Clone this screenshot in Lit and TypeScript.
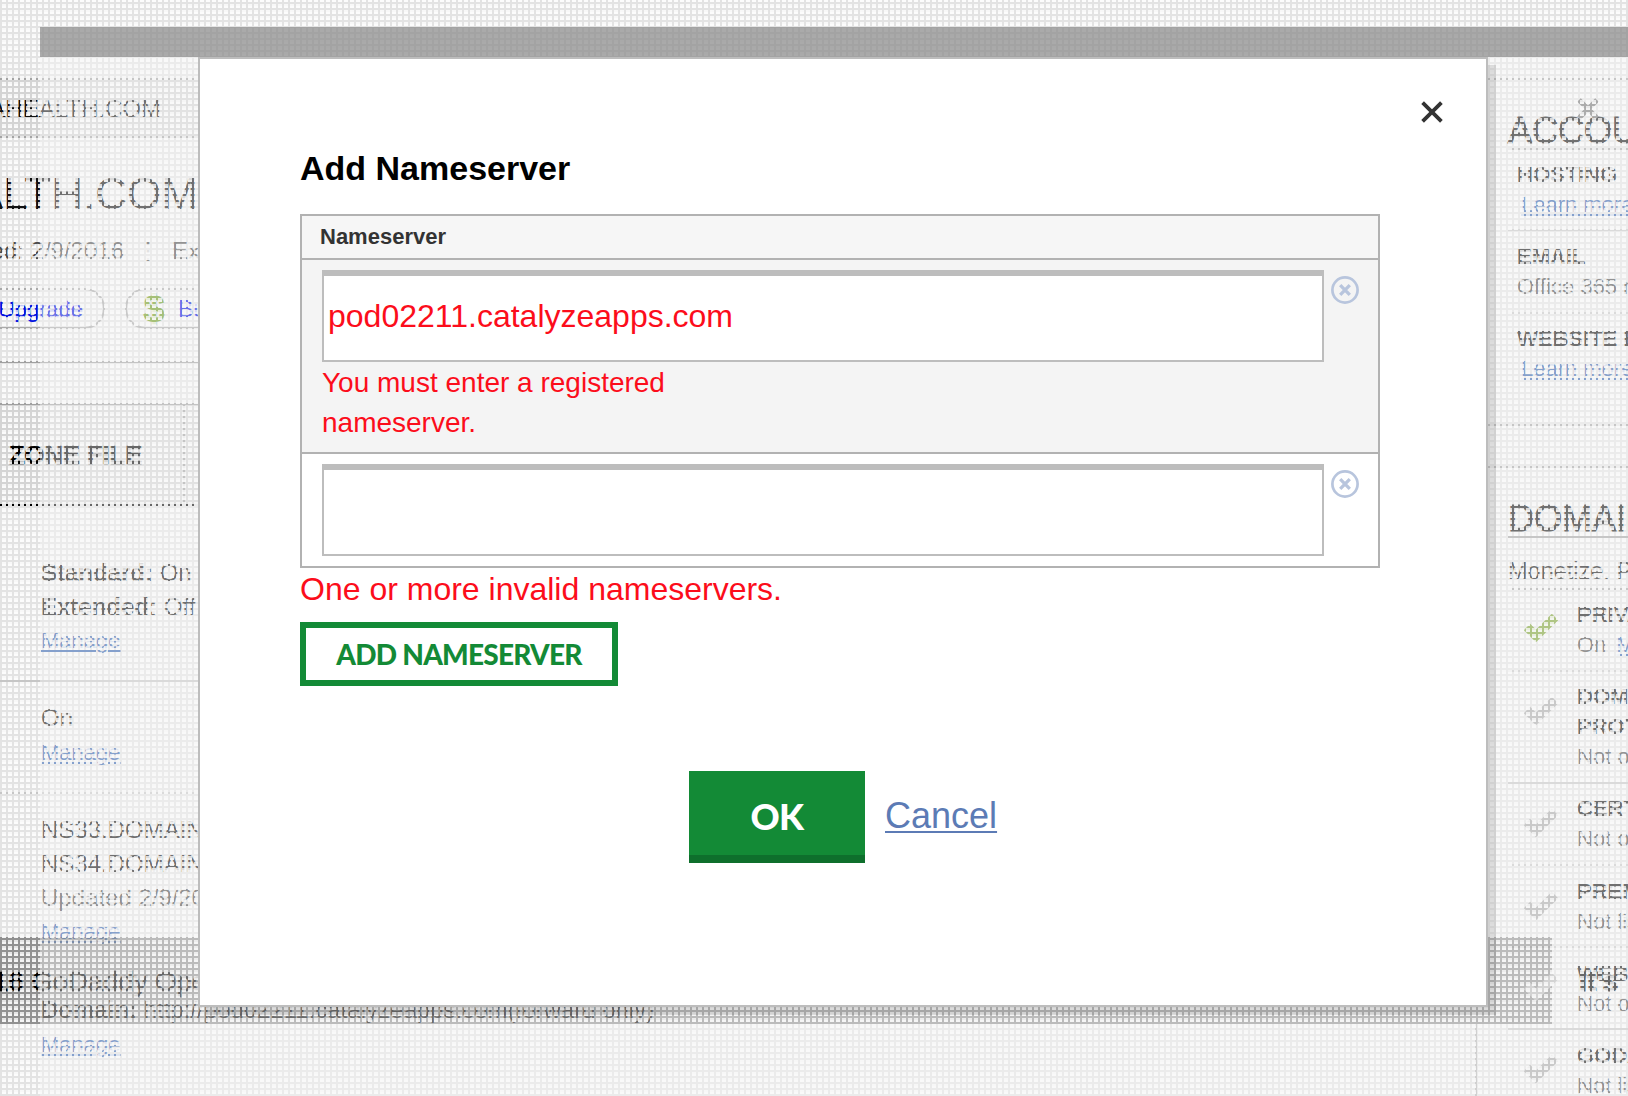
import { LitElement, html, css, svg } from "lit";
import { customElement } from "lit/decorators.js";

// One line of the page below the dialog: height down to its baseline (or rule), classes, content.
type Line = [number, string, unknown?];

const link = (t: string) => html`<span class="t link">${t}</span>`;
const tx = (t: unknown, c = "") => html`<span class="t ${c}">${t}</span>`;

const mainLines: Line[] = [
  [80, "rule"],
  [36, "shade", tx("ACATALYZEAHEALTH.COM", "crumb")],
  [22, "shade rule"],
  [70, "", tx("CATALYZEAHEALTH.COM", "name")],
  [50, "", html`${tx("Created: 2/9/2016", "dates soft")}${tx("⋮", "sep soft")}${tx("Expires", "soft")}`],
];

const detailLines: Line[] = [
  [74, "in", html`${tx(html`<b>Standard:</b> On`)}`],
  [34, "in", html`${tx(html`<b>Extended:</b> Off`)}`],
  [34, "in", link("Manage")],
  [34, "rule pale"],
  [43, "in", tx("On")],
  [35, "in", link("Manage")],
  [34, "rule pale"],
  [43, "in", tx("NS33.DOMAINCONTROL.COM")],
  [34, "in", tx("NS34.DOMAINCONTROL.COM")],
  [34, "in", tx("Updated 2/9/2016", "soft")],
  [34, "in", link("Manage")],
  [78, "in", tx(html`<b>Domain:</b> http://pod02211.catalyzeapps.com(forward only)`)],
  [35, "in", link("Manage")],
];

const accountLines: Line[] = [
  [80, "rule wide"],
  [62, "", tx("ACCOUNT", "head")],
  [8, "rule"],
  [32, "i1", tx("HOSTING", "cap")],
  [30, "i2", link("Learn more")],
  [19, "rule pale"],
  [33, "i1", tx("EMAIL", "cap")],
  [30, "i1", tx("Office 365 not set up", "small")],
  [20, "rule pale"],
  [32, "i1", tx("WEBSITE BUILDER", "cap")],
  [30, "i2", link("Learn more")],
  [50, "rule wide"],
  [42, "rule wide"],
  [62, "", tx("DOMAIN", "head")],
  [8, "rule"],
  [40, "", tx("Monetize. Protect.", "mon")],
  [12, "rule"],
  [32, "i3", tx("PRIVACY", "cap")],
  [30, "i3", html`${tx("On", "small on")}${link("Manage")}`],
  [20, "rule pale"],
  [32, "i3", tx("DOMAIN", "cap")],
  [30, "i3", tx("PROTECTION", "cap")],
  [30, "i3", tx("Not owned", "small")],
  [20, "rule pale"],
  [32, "i3", tx("CERTIFIED", "cap")],
  [30, "i3", tx("Not owned", "small")],
  [20, "rule pale"],
  [33, "i3", tx("PREMIUM", "cap")],
  [30, "i3", tx("Not listed", "small")],
  [19, "rule pale"],
  [33, "i3", tx("WEBSITE", "cap")],
  [30, "i3", tx("Not owned", "small")],
  [19, "rule pale"],
  [33, "i3", tx("GODADDY", "cap")],
  [30, "i3", tx("Not listed", "small")],
];

const checks = [
  { y: 627, c: "#7ca332" },
  { y: 710, c: "#aaa" },
  { y: 822, c: "#aaa" },
  { y: 905, c: "#aaa" },
  { y: 986, c: "#bbb" },
  { y: 1068, c: "#aaa" },
];

const draw = (lines: Line[]) =>
  lines.map(([h, c, body]) => html`<div class="line ${c}" style="height:${h}px">${body}</div>`);

const removeIcon = html`<svg class="remove" viewBox="0 0 28 28">
  <circle cx="14" cy="14" r="12.6" fill="none" stroke="#b8c5dd" stroke-width="2.7" />
  <path d="M9.2 9.2 18.8 18.8M18.8 9.2 9.2 18.8" stroke="#b8c5dd" stroke-width="3.3" />
</svg>`;

@customElement("app-root")
export class AppRoot extends LitElement {
  static styles = css`
    :host { display: block; font-family: "Liberation Sans", Arial, sans-serif; }
    * { box-sizing: border-box; }
    .page { position: relative; width: 1628px; height: 1096px; overflow: hidden; background: #e3e3e3; }
    .under { display: flex; height: 1096px; font-size: 24px; color: #111; }
    .main { width: 1486px; flex: none; overflow: hidden; }
    .side { width: 142px; flex: none; padding-left: 22px; }
    .line { display: flex; align-items: flex-end; white-space: nowrap; }
    .t { line-height: 0; margin-bottom: calc(.3465em - 1px); flex: none; white-space: pre; }
    .in { padding-left: 41px; }
    .i1 { padding-left: 9px; }
    .i2 { padding-left: 13px; }
    .i3 { padding-left: 69px; }
    .rule { border-bottom: 2px solid #a4a4a4; }
    .pale { border-bottom-color: #c6c6c6; }
    .wide { margin-left: -20px; }
    .shade { background: #d4d4d4; }
    .soft { color: #4c4c4c; }
    .link { font-size: 22px; color: #3462ae; text-decoration: underline; text-underline-offset: 2px; text-decoration-thickness: 2px; }
    .crumb { width: 161px; direction: rtl; }
    .name { font-size: 44px; width: 198px; direction: rtl; }
    .dates { width: 124px; display: flex; justify-content: flex-end; }
    .sep { width: 48px; text-align: center; }
    .head { font-size: 36px; -webkit-text-stroke: 1.1px #111; }
    .cap { font-size: 22px; font-weight: bold; }
    .small { font-size: 22px; color: #4c4c4c; }
    .on { margin-right: 10px; }
    .mon { font-size: 23.5px; }

    .pills { display: flex; gap: 20px; margin: 30px 0 32px -60px; height: 41px; color: #0010e0; }
    .pill { border: 2px solid #aaa; border-radius: 21px; height: 41px; display: flex; align-items: center; padding-top: 2px; }
    .up { width: 165px; justify-content: flex-end; padding-right: 20px; font-size: 22px; -webkit-text-stroke: .4px #0010e0; }
    .buy { width: 200px; padding-left: 17px; gap: 14px; font-size: 23px; }
    .dollar { color: #6c9a1c; font-size: 36px; line-height: 36px; -webkit-text-stroke: 1.6px #6c9a1c; }
    .gap { height: 42px; border-top: 2px solid #a0a0a0; }
    .tabs { height: 103px; background: #d4d4d4; border-top: 2px solid #a0a0a0; border-bottom: 2px solid #000; display: flex; }
    .tab { width: 185px; border-right: 2px solid #a0a0a0; padding: 35px 0 0 9px; font-size: 25.5px; line-height: 30px; font-weight: bold; color: #000; -webkit-text-stroke: .6px #000; }

    .foot { position: absolute; left: 0; top: 937px; width: 1552px; height: 87px; background: rgba(0,0,0,.36); }
    .legal { position: absolute; left: -7px; top: 967px; font-size: 27.5px; line-height: 30px; color: #000; white-space: pre; -webkit-text-stroke: .6px #000; }
    .free { position: absolute; left: 1579px; top: 967px; font-size: 28px; line-height: 30px; font-weight: bold; color: #000; white-space: pre; -webkit-text-stroke: 1px #000; }
    .divider { position: absolute; left: 1475px; top: 1024px; width: 2px; height: 72px; background: #b5b5b5; }
    .overlay { position: absolute; left: 0; top: 0; width: 1628px; height: 1096px; }
    .veil { position: absolute; left: 40px; top: 27px; width: 1600px; height: 1080px; border-top: 30px solid rgba(139,139,139,.72); background: rgba(245,245,245,.42); background-clip: padding-box; }

    .dialog { position: absolute; left: 198px; top: 57px; width: 1290px; height: 950px; background: #fff; border: 2px solid #bdbdbd; box-shadow: 8px 8px 0 rgba(0,0,0,.11); padding: 42px 43px 0 100px; display: flex; flex-direction: column; }
    .close { width: 22px; height: 22px; align-self: flex-end; flex: none; }
    h1 { margin: 25px 0 0; font-size: 34px; line-height: 40px; height: 66px; color: #000; }
    .table { width: 1080px; height: 354px; flex: none; border: 2px solid #b2b2b2; }
    .th { height: 44px; border-bottom: 2px solid #b2b2b2; background: #f6f6f6; padding-left: 18px; font-size: 22px; line-height: 41px; font-weight: bold; color: #333; }
    .row { display: flex; padding: 10px 0 0 20px; gap: 6.6px; }
    .row.bad { height: 194px; background: #f4f4f4; border-bottom: 2px solid #b2b2b2; }
    .cell { width: 1002px; }
    .field { height: 92px; border: 2px solid #bdbdbd; border-top-width: 6px; background: #fff; padding-left: 4px; font-size: 32px; line-height: 81px; color: #fc0d1b; }
    .msg { width: 400px; padding-top: 1px; font-size: 28px; line-height: 40px; color: #fc0d1b; }
    .remove { width: 28px; height: 28px; margin-top: 6px; }
    .err { font-size: 32px; line-height: 36px; margin-top: 3px; color: #fc0d1b; }
    .add { margin-top: 15px; width: 318px; height: 64px; flex: none; border: 6px solid #138a36; color: #138a36; font: 900 28px/53px Lato, sans-serif; letter-spacing: -.75px; text-align: center; white-space: nowrap; }
    .actions { display: flex; gap: 20px; margin: 85px 0 0 389px; }
    .ok { width: 176px; height: 92px; background: #138a36; border-bottom: 8px solid #0e6f2c; color: #fff; font: 900 36px/91px Lato, sans-serif; letter-spacing: -.6px; text-align: center; }
    .cancel { font-size: 36px; line-height: 89px; color: #5c7bb5; text-decoration: underline; text-decoration-thickness: 2px; text-underline-offset: 3px; }
  `;

  render() {
    return html`<div class="page">
      <div class="under">
        <div class="main">
          ${draw(mainLines)}
          <div class="pills">
            <div class="pill up">Upgrade</div>
            <div class="pill buy"><span class="dollar">$</span>Buy</div>
          </div>
          <div class="gap"></div>
          <div class="tabs"><div class="tab">ZONE FILE</div></div>
          ${draw(detailLines)}
        </div>
        <div class="side">${draw(accountLines)}</div>
      </div>
      <div class="foot"></div>
      <div class="legal">16 GoDaddy Operating</div>
      <div class="free">It's</div>
      <div class="divider"></div>
      <svg class="overlay" viewBox="0 0 1628 1096">
        <path d="M1579 100 1597 118M1597 100 1579 118" stroke="#777" stroke-width="5" />
        ${checks.map(
          (k) => svg`<path d="M1527 ${k.y} l9 9 l19 -19" fill="none" stroke=${k.c} stroke-width="9" />`
        )}
      </svg>
      <svg class="overlay" viewBox="0 0 1628 1096">
        <defs>
          <pattern id="mesh" width="6" height="6" patternUnits="userSpaceOnUse">
            <rect x="2" y="0" width="4" height="2" fill="#fff" fill-opacity=".9" />
            <rect x="2" y="4" width="4" height="2" fill="#fff" fill-opacity=".76" />
          </pattern>
        </defs>
        <rect width="1628" height="1096" fill="url(#mesh)" />
      </svg>
      <div class="veil"></div>
      <div class="dialog">
        <svg class="close" viewBox="0 0 22 22"><path d="M1.6 1.6 20.4 20.4M20.4 1.6 1.6 20.4" stroke="#333" stroke-width="3.8" /></svg>
        <h1>Add Nameserver</h1>
        <div class="table">
          <div class="th">Nameserver</div>
          <div class="row bad">
            <div class="cell">
              <div class="field">pod02211.catalyzeapps.com</div>
              <div class="msg">You must enter a registered nameserver.</div>
            </div>
            ${removeIcon}
          </div>
          <div class="row">
            <div class="cell"><div class="field"></div></div>
            ${removeIcon}
          </div>
        </div>
        <div class="err">One or more invalid nameservers.</div>
        <div class="add">ADD NAMESERVER</div>
        <div class="actions"><div class="ok">OK</div><div class="cancel">Cancel</div></div>
      </div>
    </div>`;
  }
}
